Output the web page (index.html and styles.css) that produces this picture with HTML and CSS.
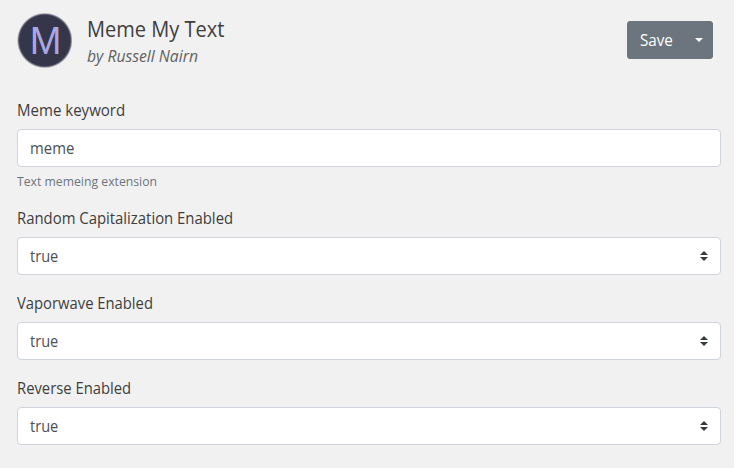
FILE: index.html
```html
<!DOCTYPE html>
<html lang="en">
<head>
<meta charset="utf-8">
<title>Meme My Text</title>
<link rel="stylesheet" href="styles.css">
</head>
<body>
<header class="header">
  <svg class="logo" width="56" height="56" viewBox="0 0 56 56">
    <defs>
      <radialGradient id="edge">
        <stop offset="0.9" stop-color="#35364a"/>
        <stop offset="0.94" stop-color="#6d6e7a"/>
        <stop offset="0.97" stop-color="#c4c4c8"/>
        <stop offset="1" stop-color="#f1f1f1"/>
      </radialGradient>
    </defs>
    <circle cx="28.8" cy="28.5" r="28" fill="url(#edge)"/>
    <text class="logo-letter" x="29.7" y="41.6" text-anchor="middle">M</text>
  </svg>
  <div class="titles">
    <h1 class="title"><span class="fit t-title">Meme My Text</span></h1>
    <p class="author"><span class="fit t-author">by Russell Nairn</span></p>
  </div>
  <div class="actions">
    <button class="save"><span class="fit t-save">Save</span></button>
    <button class="toggle" aria-label="More"><span class="caret"></span></button>
  </div>
</header>
<form class="form">
  <div class="group group-help">
    <label class="label"><span class="fit t-key">Meme keyword</span></label>
    <div class="control"><span class="fit t-meme">meme</span></div>
    <small class="help"><span class="fit t-help">Text memeing extension</span></small>
  </div>
  <div class="group">
    <label class="label"><span class="fit">Random Capitalization Enabled</span></label>
    <div class="control"><span class="fit t-true">true</span><svg class="arrows" width="8" height="10" viewBox="0 0 4 5"><path fill="#343a40" d="M2 0L0 2h4zm0 5L0 3h4z"/></svg></div>
  </div>
  <div class="group">
    <label class="label"><span class="fit t-vapor">Vaporwave Enabled</span></label>
    <div class="control"><span class="fit t-true">true</span><svg class="arrows" width="8" height="10" viewBox="0 0 4 5"><path fill="#343a40" d="M2 0L0 2h4zm0 5L0 3h4z"/></svg></div>
  </div>
  <div class="group">
    <label class="label"><span class="fit t-reverse">Reverse Enabled</span></label>
    <div class="control"><span class="fit t-true">true</span><svg class="arrows" width="8" height="10" viewBox="0 0 4 5"><path fill="#343a40" d="M2 0L0 2h4zm0 5L0 3h4z"/></svg></div>
  </div>
</form>
</body>
</html>
```
FILE: styles.css
```css
* { box-sizing: border-box; }
body { margin: 0; height: 468px; overflow: hidden; padding: 12px 13px 0 16px; background: #f1f1f1; color: #3e3e3e; font: 16px/24px "Open Sans", "Noto Sans", sans-serif; }
.header { display: flex; height: 86px; }
.logo { flex: none; }
.logo-letter { font: 38px "Liberation Sans", sans-serif; fill: #aba7e4; }
.titles { margin-left: 15px; padding-top: 5px; flex: 1; }
.title { margin: 0; height: 26px; font-size: 21px; line-height: 24px; font-weight: 400; }
.author { margin: 1px 0 0; font-style: italic; color: #626262; }
.fit { display: inline-block; white-space: nowrap; transform: scaleX(.93); transform-origin: left; }
.t-title { transform: scaleX(.953); }
.t-author { transform: scaleX(.982); }
.t-key { transform: scaleX(.94); }
.t-vapor, .t-reverse { transform: scaleX(.925); }
.t-meme { transform: scaleX(.93); }
.t-true { transform: scaleX(.91); }
.t-help { transform: scaleX(.955); }
.t-save { transform: scaleX(.95); }
.actions { display: flex; height: 38px; margin: 9px 8px 0 0; border-radius: 4px; overflow: hidden; background: #6c757d; }
.save, .toggle { border: 0; padding: 0; background: #6c757d; color: #fff; font: inherit; }
.save { width: 58px; padding: 0 0 0 13px; text-align: left; }
.toggle { width: 28px; display: flex; align-items: center; justify-content: center; }
.caret { border: 4.8px solid transparent; border-top-color: #fff; border-bottom: 0; }
.form { margin-left: 1px; }
.group { height: 85px; }
.group-help { height: 108px; }
.label { display: block; height: 31px; }
.control { display: flex; align-items: center; justify-content: space-between; height: 38px; padding: 0 12px; border: 1px solid #ced4da; border-radius: 4px; background: #fff; color: #495057; }
.help { display: block; margin-top: 4px; font-size: 12.8px; line-height: 20px; color: #6c757d; }
```
